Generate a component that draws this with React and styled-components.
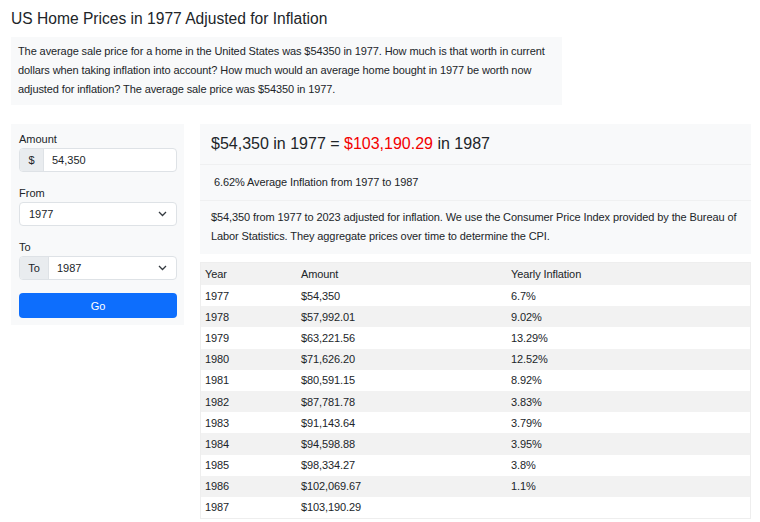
import React from 'react';
import styled, { createGlobalStyle } from 'styled-components';

const GlobalStyle = createGlobalStyle`
    body {
        margin: 0;
        font-family: "Liberation Sans", Arial, sans-serif;
        color: #212529;
        background: #fff;
    }
`;

const Page = styled.div`
    padding: 8px 9px 0 11px;
    width: 740px;
`;

const Title = styled.h1`
    margin: 0 0 7px;
    font-size: 15.6px;
    font-weight: 400;
    line-height: 22px;
`;

const Intro = styled.div`
    width: 551px;
    box-sizing: border-box;
    background: #f8f9fa;
    padding: 5px 7px 6px;
    font-size: 11px;
    letter-spacing: -0.1px;
    line-height: 19px;
`;

const Columns = styled.div`
    display: grid;
    grid-template-columns: 173px 551px;
    column-gap: 16px;
    align-items: start;
    margin-top: 19px;
`;

const Sidebar = styled.div`
    background: #f8f9fa;
    padding: 7px 7px 7px 8px;
`;

const Field = styled.div`
    margin-bottom: 13px;
`;

const Label = styled.div`
    font-size: 11px;
    line-height: 16px;
    margin-bottom: 1px;
`;

const Group = styled.div`
    display: flex;
    height: 24px;
    border: 1px solid #dee2e6;
    border-radius: 4px;
    background: #fff;
    box-sizing: border-box;
    overflow: hidden;
    font-size: 11px;
`;

const Addon = styled.div`
    display: flex;
    align-items: center;
    justify-content: center;
    width: ${p => p.$w}px;
    background: #e9ecef;
    border-right: 1px solid #dee2e6;
`;

const Value = styled.div`
    flex: 1;
    display: flex;
    align-items: center;
    justify-content: space-between;
    padding: 0 9px 0 ${p => p.$pl}px;
`;

const Chevron = () => (
    <svg width="9" height="6" viewBox="0 0 9 6">
        <path d="M1 1l3.5 3.5L8 1" fill="none" stroke="#343a40" strokeWidth="1.3" />
    </svg>
);

const GoButton = styled.button`
    display: block;
    width: 100%;
    height: 25px;
    border: 0;
    border-radius: 4px;
    background: #0d6efd;
    color: #fff;
    font-family: inherit;
    font-size: 11px;
    margin-top: 1px;
`;

const Main = styled.div`
    display: flex;
    flex-direction: column;
    gap: 8px;
`;

const Card = styled.div`
    background: #f8f9fa;
`;

const CardRow = styled.div`
    border-top: ${p => (p.$first ? '0' : '1px solid #eff0f1')};
    padding: ${p => p.$pad};
    font-size: ${p => p.$size || 11}px;
    letter-spacing: ${p => (p.$size ? 0 : -0.1)}px;
    line-height: ${p => p.$lh || 19}px;
`;

const Red = styled.span`
    color: #f30000;
`;

const Table = styled.table`
    width: 100%;
    border-collapse: collapse;
    border: 1px solid #eeeeee;
    font-size: 11px;
    letter-spacing: -0.1px;
`;

const Row = styled.tr`
    background: ${p => (p.$shade ? '#f2f2f2' : '#fff')};
`;

const Cell = styled.td`
    height: 21.2px;
    padding: 0 4px;
    width: ${p => p.$w || 'auto'};
`;

const HeadCell = styled(Cell).attrs({ as: 'th' })`
    height: 22px;
    font-weight: 400;
    text-align: left;
`;

const rows = [
    ['1977', '$54,350', '6.7%'],
    ['1978', '$57,992.01', '9.02%'],
    ['1979', '$63,221.56', '13.29%'],
    ['1980', '$71,626.20', '12.52%'],
    ['1981', '$80,591.15', '8.92%'],
    ['1982', '$87,781.78', '3.83%'],
    ['1983', '$91,143.64', '3.79%'],
    ['1984', '$94,598.88', '3.95%'],
    ['1985', '$98,334.27', '3.8%'],
    ['1986', '$102,069.67', '1.1%'],
    ['1987', '$103,190.29', ''],
];

const App = () => (
    <Page>
        <GlobalStyle />
        <Title>US Home Prices in 1977 Adjusted for Inflation</Title>
        <Intro>
            The average sale price for a home in the United States was $54350 in 1977. How much is that worth in current dollars when taking inflation into account? How much would an average home bought in 1977 be worth now adjusted for inflation? The average sale price was $54350 in 1977.
        </Intro>
        <Columns>
            <Sidebar>
                <Field>
                    <Label>Amount</Label>
                    <Group>
                        <Addon $w={23}>$</Addon>
                        <Value $pl={8}>54,350</Value>
                    </Group>
                </Field>
                <Field>
                    <Label>From</Label>
                    <Group>
                        <Value $pl={9}>1977<Chevron /></Value>
                    </Group>
                </Field>
                <Field>
                    <Label>To</Label>
                    <Group>
                        <Addon $w={28}>To</Addon>
                        <Value $pl={8}>1987<Chevron /></Value>
                    </Group>
                </Field>
                <GoButton type="button">Go</GoButton>
            </Sidebar>
            <Main>
                <Card>
                    <CardRow $first $pad="9px 11px 10px" $size={16} $lh={21}>
                        $54,350 in 1977 = <Red>$103,190.29</Red> in 1987
                    </CardRow>
                    <CardRow $pad="8px 14px 8px">6.62% Average Inflation from 1977 to 1987</CardRow>
                    <CardRow $pad="7px 10px 8px 11px">
                        $54,350 from 1977 to 2023 adjusted for inflation. We use the Consumer Price Index provided by the Bureau of Labor Statistics. They aggregate prices over time to determine the CPI.
                    </CardRow>
                </Card>
                <Table>
                    <thead>
                        <Row $shade>
                            <HeadCell $w="88px">Year</HeadCell>
                            <HeadCell $w="202px">Amount</HeadCell>
                            <HeadCell>Yearly Inflation</HeadCell>
                        </Row>
                    </thead>
                    <tbody>
                        {rows.map((r, i) => (
                            <Row key={r[0]} $shade={i % 2 === 1}>
                                <Cell>{r[0]}</Cell>
                                <Cell>{r[1]}</Cell>
                                <Cell>{r[2]}</Cell>
                            </Row>
                        ))}
                    </tbody>
                </Table>
            </Main>
        </Columns>
    </Page>
);

export default App;
